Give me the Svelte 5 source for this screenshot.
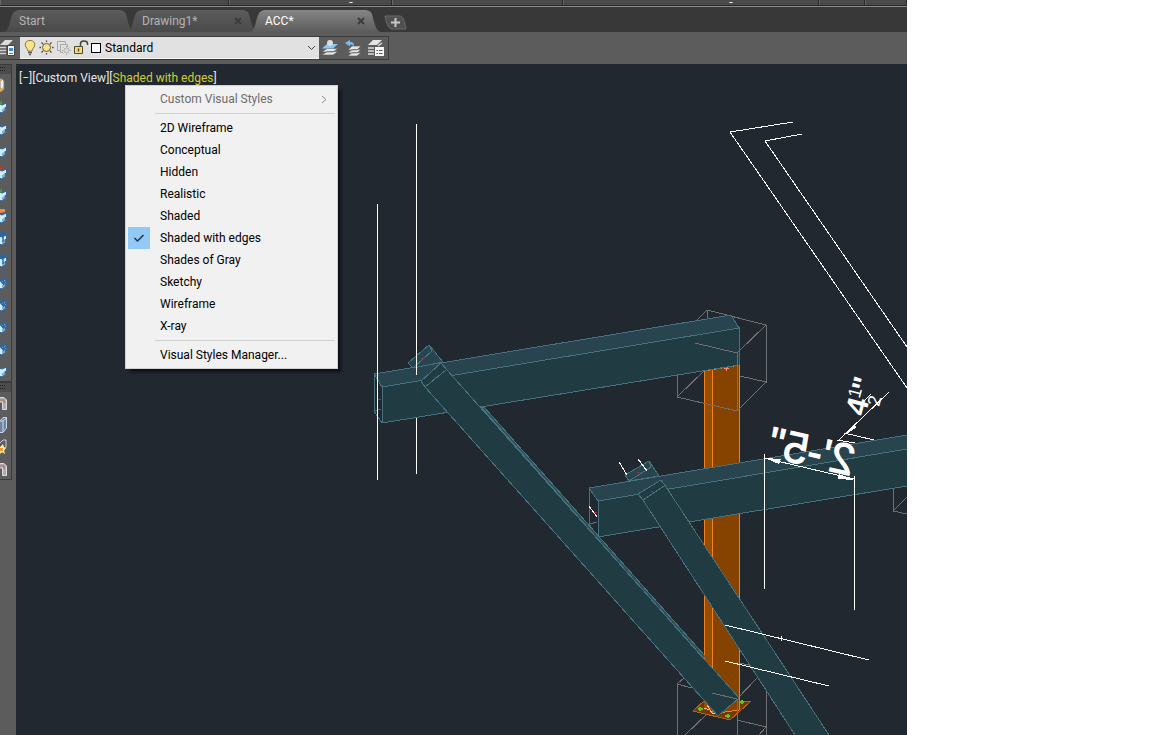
<script>
  let selected = "Shaded with edges";
  let layer = "Standard";
  let activeTab = "ACC*";

  const tabs = [
    { name: "Start", closable: false },
    { name: "Drawing1*", closable: true },
    { name: "ACC*", closable: true },
  ];

  const visualStyles = [
    "2D Wireframe",
    "Conceptual",
    "Hidden",
    "Realistic",
    "Shaded",
    "Shaded with edges",
    "Shades of Gray",
    "Sketchy",
    "Wireframe",
    "X-ray",
  ];

  const solidTools = [
    { name: "Layers", kind: "drum" },
    { name: "Union", kind: "green" },
    { name: "Subtract", kind: "block" },
    { name: "Intersect", kind: "block" },
    { name: "Delete face", kind: "red" },
    { name: "Copy face", kind: "green" },
    { name: "Color face", kind: "orange" },
    { name: "Extrude face", kind: "up" },
    { name: "Move face", kind: "up" },
    { name: "Offset face", kind: "down" },
    { name: "Rotate face", kind: "down" },
    { name: "Taper face", kind: "down" },
    { name: "Imprint", kind: "down" },
    { name: "Shell", kind: "block" },
  ];

  const viewTools = [
    { name: "Sweep", kind: "pipe" },
    { name: "Box", kind: "cube" },
    { name: "Render", kind: "spark" },
    { name: "Loft", kind: "pipe" },
  ];

  const toolPanels = [solidTools, viewTools];
</script>

<div class="window">
  <div class="ribbon-edge">
    <div></div>
    <div><span class="mark"></span></div>
    <div></div>
    <div><span class="mark"></span></div>
    <div></div>
    <div></div>
  </div>

  <nav class="tabs">
    {#each tabs as tab}
      <div class="tab" class:active={activeTab === tab.name}>
        <button class="tab-name" on:click={() => (activeTab = tab.name)}>{tab.name}</button>
        {#if tab.closable}
          <button class="tab-close" aria-label="Close {tab.name}">
            <svg width="8" height="8" viewBox="0 0 8 8"><path d="M1 1L7 7M7 1L1 7" /></svg>
          </button>
        {/if}
      </div>
    {/each}
    <button class="tab-new" aria-label="New drawing">
      <svg width="23" height="15" viewBox="0 0 23 15">
        <path class="shape" d="M1 1H15C19 1 20 4 22 14H9C4 14 3 10 1 1Z" />
        <path class="plus" d="M7 7.500H16M11.500 3V12" />
      </svg>
    </button>
  </nav>

  <div class="toolbar-row">
    <div class="toolbar">
      <button class="tool first" aria-label="Layer properties">
        <svg width="18" height="18" viewBox="0 0 18 18">
          <path d="M0 6L5 1H13L8 6Z" fill="#dcdcdc" />
          <path d="M0 8.500H6M0 11.500H6M0 14.500H6" stroke="#d0d0d0" stroke-width="1.500" />
          <path d="M7.500 6.500H14.500V16.500H7.500Z" fill="#f4f4f4" stroke="#444" />
          <path d="M9 9H13V12H9Z" fill="#3b8fd6" />
          <path d="M9 14.500H13" stroke="#777" />
        </svg>
      </button>
      <div class="combo">
        <svg width="76" height="20" viewBox="0 0 76 20">
          <path d="M10 2.500C6.500 2.500 4.500 5 5.500 8C6 9.500 7.500 10.500 8 13H12C12.500 10.500 14 9.500 14.500 8C15.500 5 13.500 2.500 10 2.500Z" fill="#fbe58c" stroke="#8b7440" />
          <path d="M8 14.500H12M9 16.500H11" stroke="#555" stroke-width="1.500" />
          <circle cx="26.500" cy="9.500" r="4" fill="#fbe58c" stroke="#6b5a2c" />
          <path d="M26.500 2.500V4M26.500 15V16.500M19.500 9.500H21M32 9.500H33.500M21.500 4.500L23 6M30 13L31.500 14.500M21.500 14.500L23 13M30 6L31.500 4.500" stroke="#4b4b4b" stroke-width="1.300" />
          <g fill="none" stroke="#a8a8a8">
            <path d="M37.500 3.500H45.500V6M37.500 3.500V12.500H40M40.500 6.500H47.500V9M40.500 6.500V14.500H43" />
            <circle cx="46.500" cy="12.500" r="2.500" fill="#d8d8d8" stroke="#b8b8b8" />
            <path d="M46.500 8V9.500M46.500 15.500V17M42 12.500H43.500M49.500 12.500H51M43.500 9.500L44.500 10.500M48.500 14.500L49.500 15.500M49.500 9.500L48.500 10.500M44.500 14.500L43.500 15.500" />
          </g>
          <path d="M60.500 9V5.500C60.500 2 67.500 2 67.500 5.500V7" fill="none" stroke="#444" stroke-width="1.500" />
          <path d="M54.500 8.500H62.500V15.500H54.500Z" fill="#f4dc7c" stroke="#54492b" />
          <path d="M58.500 10.500V13.500" stroke="#54492b" stroke-width="1.500" />
        </svg>
        <span class="swatch"></span>
        <select bind:value={layer} aria-label="Layer">
          <option>Standard</option>
        </select>
        <svg class="chevron" width="9" height="6" viewBox="0 0 9 6"><path d="M1 1L4.500 4.500L8 1" /></svg>
      </div>
      <button class="tool" aria-label="Make object's layer current">
        <svg width="18" height="18" viewBox="0 0 18 18">
          <path d="M1 16L6 12.500H17L12 16ZM1 13L6 9.500H17L12 13Z" fill="#e4e4e4" stroke="#5c5c5c" stroke-width=".6" />
          <path d="M1 9.500L6 5H17L12 9.500Z" fill="#8cc8f4" />
          <circle cx="9" cy="4" r="3" fill="#ddd" />
        </svg>
      </button>
      <button class="tool" aria-label="Layer previous">
        <svg width="18" height="18" viewBox="0 0 18 18">
          <path d="M4 17L8 13.500H17L13 17ZM4 14L8 10.500H17L13 14ZM4 11L8 7H17L13 11Z" fill="#e4e4e4" stroke="#5c5c5c" stroke-width=".6" />
          <path d="M1 4L6 1V3C9 3 10 4 10 7C8 5.500 7 5.500 6 5.500V7.500Z" fill="#74bdf2" />
        </svg>
      </button>
      <button class="tool" aria-label="Layer states">
        <svg width="18" height="18" viewBox="0 0 18 18">
          <path d="M1 6L6 1H15L10 6Z" fill="#e4e4e4" />
          <path d="M1 9H7M1 12H7M1 15H7M11 7L15 4" stroke="#ddd" stroke-width="1.500" />
          <path d="M8 8H17V17H8Z" fill="#f6f6f6" />
          <path d="M9.500 11.500H11M12 11.500H15.500M9.500 14.500H11M12 14.500H15.500" stroke="#555" />
        </svg>
      </button>
    </div>
  </div>

  <div class="workspace">
    <aside class="dock">
      {#each toolPanels as tools}
        <div class="panel">
          <div class="grip">
            <svg width="11" height="6" viewBox="0 0 11 6">
              <path d="M0 1.500H1M2 1.500H3M4 1.500H5M0 4.500H1M2 4.500H3M4 4.500H5" />
            </svg>
          </div>
          {#each tools as tool}
            <button class="side-tool" aria-label={tool.name}>
              <svg width="8" height="18" viewBox="0 0 8 18">
                {#if tool.kind === "drum"}
                  <path d="M0 3C2 2 4 4 4 6V13C3 15 1 16 0 16Z" fill="#f1efe8" stroke="#777" />
                  <path d="M0 3H2V5H0ZM0 13L4 11V13L0 16Z" fill="#e8a33a" />
                {:else if tool.kind === "pipe"}
                  <path d="M0 3.500H4L6.500 6V15.500H2.500V8H0" fill="#a9adb6" stroke="#d8dbe2" />
                  <path d="M0 6H4V9" fill="none" stroke="#c06a48" />
                {:else if tool.kind === "cube"}
                  <path d="M0 5L3 1.500H6.500V12L3 16.500H0M0 5H3V16M3 5L6.500 2" fill="#72849d" stroke="#c4d7ec" />
                {:else if tool.kind === "spark"}
                  <path d="M0 5L3 2H6V9L3 14H0" fill="none" stroke="#c9cfd8" />
                  <path d="M0 9L3 6L4 9L6 10L4 12L5 16L2 14L0 16Z" fill="#ffe7a4" />
                  <path d="M0 10H3V13H0Z" fill="#f29a2c" />
                {:else}
                  <path d="M-1 6L2 7L6.500 5V9L4.500 10L5.500 12L2 15L-1 14Z" fill="#d4ebfa" stroke="#2f6796" />
                  <path d="M2 11V14L5 12V10Z" fill="#7ea9cd" />
                  {#if tool.kind === "green"}
                    <path d="M0 5L2 2V6L0 7Z" fill="#3aaa32" />
                  {:else if tool.kind === "red"}
                    <path d="M0 2L3 4L1 6H0Z" fill="#d5321f" />
                  {:else if tool.kind === "orange"}
                    <path d="M0 1H5V4L0 5Z" fill="#f0894a" />
                  {:else if tool.kind === "up"}
                    <path d="M3 12V2M0 5L3 2L6 5" fill="none" stroke="#1c69b4" stroke-width="1.500" />
                  {:else if tool.kind === "down"}
                    <path d="M3.500 0V9M0 6L3.500 10L6.500 6" fill="none" stroke="#1c69b4" stroke-width="1.500" />
                  {/if}
                {/if}
              </svg>
            </button>
          {/each}
        </div>
      {/each}
    </aside>

    <main class="viewport">
      <svg class="model" viewBox="16 64 891 671" preserveAspectRatio="xMinYMin slice" aria-label="Steel frame model">
        <!-- bounding boxes behind the steel -->
        <g class="box">
          <path d="M697 320L707 310L766 325V382L740 376M707 310V320M677 375V397L704 371" />
          <path d="M893 488V511L907 497M893 511L907 514" />
          <path d="M692 688L677 684V735M677 684L684 678M685 735L707 714M766 691V735M737 720L766 727L759 735M737 699L757 678M725 661L750 665" />
        </g>

        <!-- base plate and column -->
        <path class="plate" d="M693 711L704 701L750 702L730 720Z" />
        <path class="col-side" d="M704 371L712 369V710H704Z" />
        <path class="col-face" d="M712 369L740 365V710L713 714Z" />
        <path class="col-edge" d="M704 371V680M712 369V714L739 710V365M704 371L740 365" />
        <path d="M724 368H729M726 368V371" stroke="#ff8d78" />

        <!-- upper beam -->
        <path class="face" d="M382 387L739 328V365L382 423Z" />
        <path class="top" d="M374 374L731 315L739 328L382 387Z" />
        <path class="line" d="M374 374V411L382 423M374 411L381 409" />
        <path class="top" d="M408 363L429 345L443 362L413 368Z" />
        <path class="line" d="M413 368L432 351L429 345" />

        <!-- lower beam -->
        <path class="face" d="M598 501L907 449V486L598 537Z" />
        <path class="top" d="M589 488L907 435V449L598 501Z" />
        <path class="line" d="M589 488V524L598 537M590 524L597 522" />
        <path class="top" d="M625 475L649 461L659 476L629 481Z" />
        <path class="line" d="M629 481L651 467L649 461" />

        <!-- braces -->
        <path class="face" d="M643 500L638 494L661 480L666 487L829 735H795Z" />
        <path class="line" d="M643 500L664 486" />
        <path class="rib" d="M481 407L484 407L705 656L703 660Z" />
        <path class="face" d="M425 387L421 381L441 363L447 370L739 698L718 716Z" />
        <path class="line" d="M425 387L446 370M481 407L703 658" />

        <g class="bolts">
          <path d="M698 709H703M700 707V711M725 716H730M728 714V718M739 702H744M742 700V704" />
        </g>
        <path d="M704 708L710 710M707 705L712 713L715 714" stroke="#ffb28b" />
        <g class="box">
          <path d="M695 343L737 353L766 325M737 353V411L766 382M677 397L737 411" />
          <path d="M712 693L737 699V735" />
        </g>
        <path class="red" d="M377 399H381M421 358H424M434 377H436M593 512H597M637 472H640M651 491H653" />

        <!-- construction lines -->
        <g class="white">
          <path d="M377 204V480M416 124V375M416 418V474" />
          <path d="M793 122L730 132L907 388M802 134L765 141L907 347" />
          <path d="M619 462L627 475M638 459L647 471M589 506L597 517" />
          <path d="M725 625L869 660M781 636V641M725 661L829 686" />
          <path d="M764 454V589M854 476V610M764 458L854 479" />
          <path d="M889 392L838 441M844 433L874 440M837 440L855 443" />
        </g>
        <path class="arrow" d="M765 458L781 459L779 464ZM854 480L839 474L838 479ZM848 433L853 425L857 427Z" />

        <text class="dim large" transform="translate(851 476) rotate(13) scale(-1 1)">2'-5"</text>
        <g transform="translate(865 417) rotate(-75)">
          <text class="dim">4</text>
          <text class="dim small" x="16" y="-10">1</text>
          <text class="dim small" x="13" y="11">2</text>
          <text class="dim" x="24">"</text>
          <path d="M14 -6L24 0" stroke="#fff" />
        </g>
      </svg>

      <div class="view-label">
        <button>[−]</button><button>[Custom View]</button><button
          >[<span class="style-name">{selected}</span>]</button>
      </div>

      <div class="menu" role="menu">
        <button class="item disabled" role="menuitem" disabled>
          <span class="check"></span>
          <span class="label">Custom Visual Styles</span>
          <svg width="6" height="9" viewBox="0 0 6 9"><path d="M1 1L5 4.500L1 8" /></svg>
        </button>
        <hr />
        {#each visualStyles as style}
          <button
            class="item"
            role="menuitemradio"
            aria-checked={selected === style}
            on:click={() => (selected = style)}>
            <span class="check" class:on={selected === style}>
              {#if selected === style}
                <svg width="12" height="10" viewBox="0 0 12 10"><path d="M1.500 5L4.500 8L10.500 2" /></svg>
              {/if}
            </span>
            <span class="label">{style}</span>
          </button>
        {/each}
        <hr />
        <button class="item" role="menuitem">
          <span class="check"></span>
          <span class="label">Visual Styles Manager...</span>
        </button>
      </div>
    </main>
  </div>
</div>

<style>
  :global(body) {
    margin: 0;
    background: #fff;
  }

  .window {
    display: flex;
    flex-direction: column;
    min-height: 100vh;
    margin-right: 245px;
    background: #5c5c5c;
    font-family: Roboto, "Noto Sans", sans-serif;
    font-size: 12px;
    overflow: hidden;
  }

  button {
    padding: 0;
    border: none;
    background: none;
    color: inherit;
    font: inherit;
    text-align: left;
  }

  svg {
    display: block;
    fill: none;
  }

  .ribbon-edge {
    display: grid;
    grid-template-columns: 229fr 163fr 171fr 256fr 46fr 42fr;
    height: 5px;
    background: #4a4a4a;
    border-bottom: 1px solid #2a2a2a;
  }

  .ribbon-edge div {
    display: flex;
    justify-content: center;
    border-right: 1px solid #2a2a2a;
    border-left: 1px solid #666;
  }

  .mark {
    width: 4px;
    height: 2px;
    margin-left: 80px;
    border-bottom: 1px solid #eee;
    border-radius: 2px;
  }

  .tabs {
    display: flex;
    align-items: flex-end;
    height: 25px;
    padding-left: 3px;
    border-top: 1px solid #8a8a8a;
    background: #383838;
  }

  .tab {
    display: flex;
    align-items: center;
    justify-content: space-between;
    box-sizing: border-box;
    width: 132px;
    height: 22px;
    margin-right: -9px;
    padding: 0 16px;
    background: linear-gradient(#5c5c5c, #4a4a4a);
    color: #b4b4b4;
    clip-path: path("M0 22C5 22 6 16 8 8C10 2 12 0 17 0H115C121 0 123 2 124 8C126 16 128 22 132 22Z");
  }

  .tab.active {
    z-index: 1;
    background: linear-gradient(#858585, #5c5c5c);
    color: #fff;
  }

  .tab-close svg {
    stroke: #3c3c3c;
    stroke-width: 2;
  }

  .tab-new {
    margin: 0 12px 2px;
  }

  .tab-new .shape {
    fill: #505050;
    stroke: #6a6a6a;
  }

  .tab-new .plus {
    stroke: #c8c8c8;
    stroke-width: 2;
  }

  .toolbar-row {
    display: flex;
    height: 28px;
    padding: 4px 0 0;
    background: #5c5c5c;
  }

  .toolbar {
    display: flex;
    align-items: center;
    box-sizing: border-box;
    height: 24px;
    border: 1px solid #3a3a3a;
    border-left: none;
  }

  .tool {
    width: 23px;
    padding-left: 2px;
    box-sizing: border-box;
  }

  .tool.first {
    width: 20px;
    padding: 0;
  }

  .combo {
    display: flex;
    align-items: center;
    box-sizing: border-box;
    width: 299px;
    height: 22px;
    padding-right: 3px;
    background: #e1e1e1;
    border-bottom: 1px solid #f4f4f4;
  }

  .combo > svg:first-child {
    margin-right: -5px;
  }

  .swatch {
    box-sizing: border-box;
    width: 10px;
    height: 10px;
    border: 1px solid #000;
    background: #fff;
  }

  .combo select {
    flex: 1;
    margin-left: 4px;
    padding: 0;
    border: none;
    background: none;
    color: #000;
    font: inherit;
    appearance: none;
  }

  .chevron {
    stroke: #444;
  }

  .workspace {
    display: flex;
    flex: 1;
  }

  .dock {
    width: 16px;
    background: #5c5c5c;
  }

  .panel {
    width: 11px;
    border-right: 1px solid #3a3a3a;
    box-shadow: inset 0 -1px #3a3a3a;
  }

  .grip {
    box-sizing: border-box;
    height: 10px;
    padding-top: 1px;
    border-top: 1px solid #3a3a3a;
    background: #4c4c4c;
    stroke: #1e1e1e;
  }

  .side-tool {
    display: flex;
    align-items: center;
    height: 22px;
  }

  .viewport {
    position: relative;
    flex: 1;
    overflow: hidden;
    background: #222830;
  }

  .model {
    position: absolute;
    width: 100%;
    height: 100%;
    shape-rendering: crispEdges;
  }

  .box {
    stroke: #6e7074;
  }

  .top {
    fill: #28454f;
    stroke: #47727d;
  }

  .face {
    fill: #213b42;
    stroke: #47727d;
  }

  .line {
    stroke: #47727d;
  }

  .rib {
    fill: #2b505a;
    stroke: #47727d;
  }

  .plate {
    fill: #6d3a08;
    stroke: #b8600c;
  }

  .col-side {
    fill: #964d00;
  }

  .col-face {
    fill: #864300;
  }

  .col-edge {
    stroke: #ef8122;
  }

  .bolts {
    stroke: #62c41c;
    stroke-width: 2;
  }

  .red {
    stroke: #b8232f;
  }

  .white {
    stroke: #fff;
  }

  .arrow {
    fill: #fff;
  }

  .dim {
    fill: #fff;
    font-family: "Liberation Sans", sans-serif;
    font-size: 30px;
    font-weight: bold;
  }

  .dim.large {
    font-size: 44px;
    font-weight: normal;
    stroke: #fff;
  }

  .dim.small {
    font-size: 18px;
    font-weight: normal;
  }

  .view-label {
    position: relative;
    display: flex;
    padding: 5px 3px;
    color: #e6e6e6;
    line-height: 18px;
  }

  .style-name {
    color: #d4cc30;
  }

  .menu {
    position: absolute;
    top: 21px;
    left: 109px;
    box-sizing: border-box;
    width: 213px;
    padding: 2px;
    border: 1px solid #d0d0d0;
    background: #f1f1f1;
    box-shadow: 4px 4px 3px -1px rgba(0, 0, 0, 0.6);
    color: #000;
  }

  .item {
    display: flex;
    align-items: center;
    width: 100%;
    height: 22px;
    padding-right: 8px;
  }

  .item:hover:enabled {
    background: #91c9f7;
  }

  .item.disabled {
    color: #6d6d6d;
  }

  .item.disabled svg {
    stroke: #8a8a8a;
  }

  .label {
    flex: 1;
  }

  .check {
    display: flex;
    align-items: center;
    justify-content: center;
    width: 22px;
    height: 22px;
    margin-right: 10px;
  }

  .check.on {
    background: #91c9f7;
  }

  .check svg {
    stroke: #1f3347;
    stroke-width: 1.500;
  }

  hr {
    height: 1px;
    margin: 3px 0 3px 27px;
    border: none;
    background: #d0d0d0;
  }
</style>
